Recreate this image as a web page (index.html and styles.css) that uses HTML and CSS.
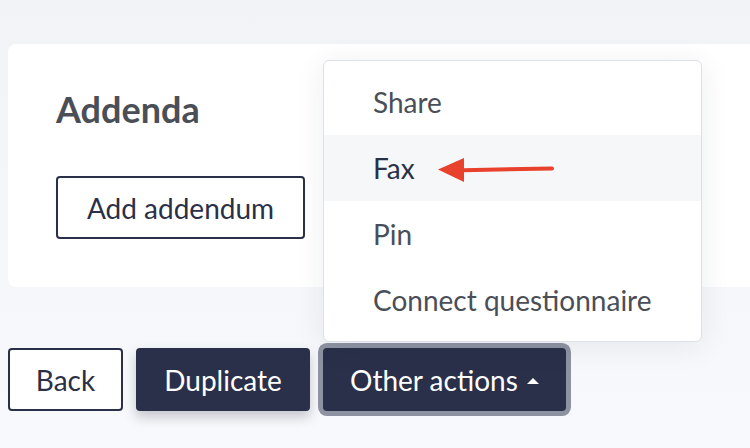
FILE: index.html
```html
<!DOCTYPE html>
<html lang="en">
<head>
    <meta charset="UTF-8">
    <meta name="viewport" content="width=device-width, initial-scale=1.0">
    <title>Addenda</title>
    <link rel="stylesheet" href="styles.css">
</head>
<body>
    <div class="page">
        <div class="card">
            <h2 class="card-title">Addenda</h2>
            <button class="btn btn-outline btn-add">Add addendum</button>
        </div>

        <div class="actions">
            <button class="btn btn-outline">Back</button>
            <button class="btn btn-dark btn-raised">Duplicate</button>
            <div class="dropdown">
                <ul class="dropdown-menu">
                    <li class="dropdown-item">Share</li>
                    <li class="dropdown-item active">
                        Fax
                        <svg class="arrow" width="120" height="28" viewBox="0 0 120 28">
                            <path d="M25 15.2 L114 13.4" stroke="#e8412c" stroke-width="4" stroke-linecap="round" fill="none"/>
                            <path d="M0 14.5 L26 3 L26 27 Z" fill="#e8412c"/>
                        </svg>
                    </li>
                    <li class="dropdown-item">Pin</li>
                    <li class="dropdown-item">Connect questionnaire</li>
                </ul>
                <button class="btn btn-dark btn-focus">Other actions <span class="caret"></span></button>
            </div>
        </div>
    </div>
</body>
</html>
```

FILE: styles.css
```css
body {
    margin: 0;
    padding: 0;
    font-family: Lato, "Noto Sans", sans-serif;
    background: linear-gradient(#f1f3f6, #f8f9fc);
    height: 448px;
    overflow: hidden;
}
.page {
    padding: 44px 0 0 8px;
}
.card {
    background: #fff;
    border-radius: 8px 0 0 8px;
    height: 243px;
    box-sizing: border-box;
    padding: 43px 0 0 48px;
}
.card-title {
    margin: 0;
    font-size: 36px;
    font-weight: 700;
    color: #4a4f57;
    line-height: 44px;
}
.btn {
    font-family: inherit;
    font-size: 28px;
    height: 63px;
    padding: 0;
    border-radius: 4px;
    cursor: pointer;
    box-sizing: border-box;
}
.btn-outline {
    background: #fff;
    border: 2px solid #2a3047;
    color: #2a3047;
}
.btn-add {
    margin-top: 45px;
    width: 249px;
}
.btn-dark {
    background: #2a3049;
    border: none;
    color: #fff;
}
.btn-raised {
    box-shadow: 0 6px 12px rgba(42, 48, 73, 0.25);
}
.actions {
    display: flex;
    align-items: flex-start;
    gap: 13px;
    margin-top: 61px;
}
.actions .btn-outline {
    width: 115px;
}
.actions .btn-raised {
    width: 174px;
}
.dropdown {
    position: relative;
}
.btn-focus {
    width: 243px;
    box-shadow: 0 0 0 5px #8e93a2;
}
.caret {
    display: inline-block;
    width: 0;
    height: 0;
    border-left: 6px solid transparent;
    border-right: 6px solid transparent;
    border-bottom: 6px solid #fff;
    vertical-align: middle;
    margin-left: 2px;
    margin-bottom: 4px;
}
.dropdown-menu {
    position: absolute;
    left: 0;
    bottom: 69px;
    width: 379px;
    margin: 0;
    padding: 8px 0;
    list-style: none;
    background: #fff;
    border: 1px solid #dde1e7;
    border-radius: 6px;
    box-sizing: border-box;
    box-shadow: 0 4px 30px rgba(30, 40, 60, 0.08);
}
.dropdown-item {
    position: relative;
    height: 66px;
    line-height: 66px;
    padding-left: 49px;
    font-size: 28px;
    color: #4a4f57;
}
.dropdown-item.active {
    background: #f6f7f9;
    color: #2a3047;
}
.arrow {
    position: absolute;
    left: 114px;
    top: 20px;
}
```
